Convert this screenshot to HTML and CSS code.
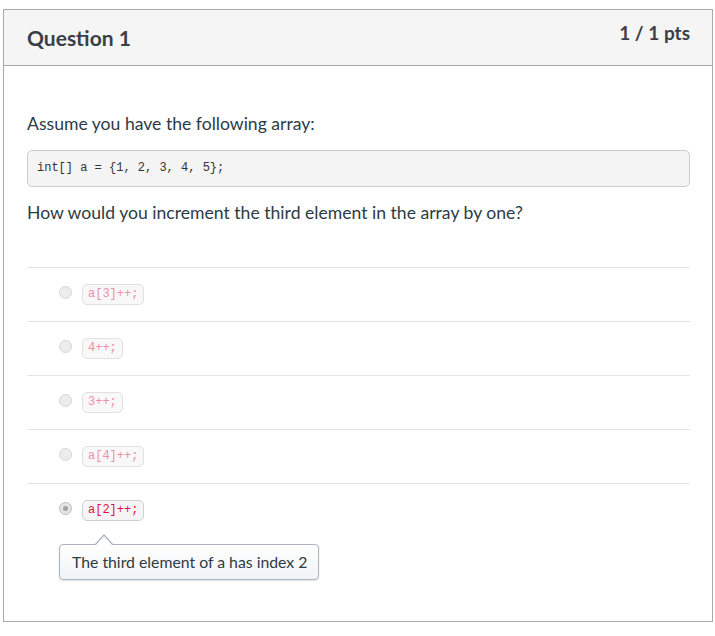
FILE: index.html
```html
<!DOCTYPE html>
<html>
<head>
<meta charset="utf-8">
<link rel="stylesheet" href="styles.css">
</head>
<body>
<div class="card">
  <div class="header">
    <h2 class="title">Question 1</h2>
    <div class="pts">1 / 1 pts</div>
  </div>
  <div class="body">
    <p class="text">Assume you have the following array:</p>
    <pre class="codeblock">int[] a = {1, 2, 3, 4, 5};</pre>
    <p class="text q">How would you increment the third element in the array by one?</p>
    <div class="answers">
      <div class="answer"><span class="radio"></span><code class="pill">a[3]++;</code></div>
      <div class="answer"><span class="radio"></span><code class="pill">4++;</code></div>
      <div class="answer"><span class="radio"></span><code class="pill">3++;</code></div>
      <div class="answer"><span class="radio"></span><code class="pill">a[4]++;</code></div>
      <div class="answer selected">
        <div class="answer-row"><span class="radio checked"></span><code class="pill">a[2]++;</code></div>
        <div class="tip">The third element of a has index 2</div>
      </div>
    </div>
  </div>
</div>
</body>
</html>
```
FILE: styles.css
```css
* { box-sizing: border-box; }
body {
  margin: 0;
  padding: 9px 2px 14px 3px;
  font-family: Lato, "Noto Sans", sans-serif;
  color: #2d3b45;
  background: #fff;
}
.card {
  width: 710px;
  height: 613px;
  border: 1px solid #a9a9a9;
}
.header {
  height: 56px;
  background: #f5f5f5;
  border-bottom: 1px solid #a9a9a9;
  display: flex;
  justify-content: space-between;
  align-items: flex-start;
  padding: 0 22px 0 23px;
}
.title {
  margin: 0;
  padding-top: 17px;
  font-size: 21px;
  line-height: 22px;
  font-weight: 700;
  color: #3b3f45;
}
.pts {
  padding-top: 12px;
  font-size: 19px;
  line-height: 22px;
  font-weight: 700;
  color: #3b3f45;
}
.body {
  padding: 45px 22px 0 23px;
}
.text {
  margin: 0;
  font-size: 17.6px;
  line-height: 25px;
}
.codeblock {
  margin: 14px 0 13px 0;
  height: 37px;
  padding: 10px 9px;
  background: #f4f4f4;
  border: 1px solid #cccccc;
  border-radius: 5px;
  font-family: "Liberation Mono", "DejaVu Sans Mono", monospace;
  font-size: 12px;
  line-height: 15px;
  color: #333;
}
.answers {
  margin-top: 42px;
}
.answer {
  border-top: 1px solid #e3e3e3;
  height: 54px;
  padding: 16px 0 0 32px;
  display: flex;
  align-items: flex-start;
  gap: 10px;
}
.answer.selected {
  display: block;
  height: auto;
}
.answer-row {
  display: flex;
  align-items: flex-start;
  gap: 10px;
}
.radio {
  width: 13px;
  height: 13px;
  margin-top: 2px;
  border-radius: 50%;
  background: #ececec;
  border: 1px solid #d6d6d6;
  flex: none;
  display: flex;
  align-items: center;
  justify-content: center;
}
.radio.checked {
  background: #e4e4e4;
  border-color: #bdbdbd;
}
.radio.checked::after {
  content: "";
  width: 5px;
  height: 5px;
  border-radius: 50%;
  background: #a3a3a3;
}
.pill {
  display: inline-block;
  height: 21px;
  padding: 0 5px;
  background: #f8f8f8;
  border: 1px solid #e1e1e1;
  border-radius: 5px;
  font-family: "Liberation Mono", "DejaVu Sans Mono", monospace;
  font-size: 12px;
  line-height: 19px;
  color: #ee8fa6;
}
.selected .pill {
  background: #f5f5f5;
  border-color: #cfcfcf;
  color: #dd1144;
}
.tip {
  position: relative;
  display: inline-block;
  margin-top: 23px;
  padding: 5px 11px 5px 12px;
  font-size: 15.8px;
  line-height: 24px;
  color: #2d3b45;
  border: 1px solid #aab4be;
  border-radius: 4px;
  background: linear-gradient(#ffffff, #f1f3f5);
  box-shadow: 0 1px 2px rgba(0,0,0,0.12);
}
.tip::before {
  content: "";
  position: absolute;
  left: 34px;
  top: -11px;
  border: 10px solid transparent;
  border-top: 0;
  border-bottom: 11px solid #aab4be;
}
.tip::after {
  content: "";
  position: absolute;
  left: 35px;
  top: -9px;
  border: 9px solid transparent;
  border-top: 0;
  border-bottom: 10px solid #ffffff;
}
```
